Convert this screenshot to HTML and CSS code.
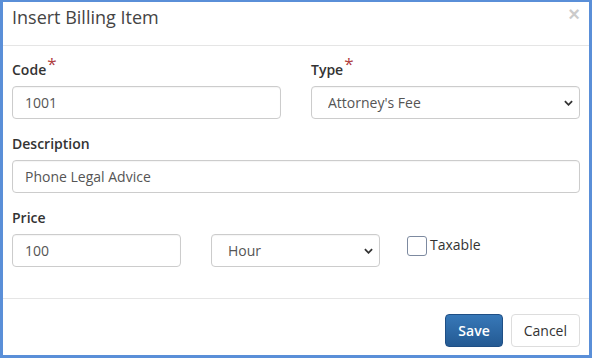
FILE: index.html
```html
<!DOCTYPE html>
<html lang="en">
<head>
  <meta charset="UTF-8" />
  <title>Insert Billing Item</title>
  <link rel="stylesheet" href="styles.css">
</head>
<body>

  <div class="frame">
    <div class="modal-header">
      <h4 class="modal-title">Insert Billing Item</h4>
      <button type="button" class="close">&times;</button>
    </div>

    <form class="modal-body" onsubmit="event.preventDefault();">
      <div class="row two">
        <div class="form-group">
          <label for="code">Code<span class="req">*</span></label>
          <input type="text" id="code" class="form-control" value="1001" />
        </div>
        <div class="form-group">
          <label for="type">Type<span class="req">*</span></label>
          <select id="type" class="form-control">
            <option>Attorney's Fee</option>
            <option>Expense</option>
          </select>
        </div>
      </div>

      <div class="form-group">
        <label for="description">Description</label>
        <input type="text" id="description" class="form-control" value="Phone Legal Advice" />
      </div>

      <div class="form-group">
        <label for="price">Price</label>
        <div class="row three">
          <input type="text" id="price" class="form-control" value="100" />
          <select id="unit" class="form-control">
            <option>Hour</option>
            <option>Item</option>
          </select>
          <label class="check">
            <input type="checkbox" id="taxable" />
            <span>Taxable</span>
          </label>
        </div>
      </div>
    </form>

    <div class="modal-footer">
      <button type="button" class="btn btn-primary">Save</button>
      <button type="button" class="btn btn-default">Cancel</button>
    </div>
  </div>

</body>
</html>
```

FILE: styles.css
```css
* {
  box-sizing: border-box;
}
body {
  margin: 0;
  font-family: "Open Sans", "Liberation Sans", sans-serif;
  font-size: 14px;
  color: #333;
  background: #fff;
}
.frame {
  display: flex;
  flex-direction: column;
  height: 358px;
  border: 3px solid #5a8fd8;
  border-top-width: 2px;
  background: #fff;
}
.modal-header {
  display: flex;
  justify-content: space-between;
  align-items: flex-start;
  height: 44px;
  padding: 3px 9px 0 9px;
  border-bottom: 1px solid #e5e5e5;
}
.modal-title {
  margin: 0;
  font-size: 18px;
  font-weight: normal;
  line-height: 24px;
  color: #444;
}
.close {
  margin: -1px 0 0;
  padding: 0;
  border: none;
  background: none;
  font-family: "Liberation Sans", sans-serif;
  font-size: 20px;
  line-height: 20px;
  font-weight: bold;
  color: #000;
  opacity: 0.2;
  cursor: pointer;
}
.modal-body {
  flex: 1;
  margin: 0;
  padding: 14px 9px 0 9px;
}
.form-group {
  margin-bottom: 15px;
}
.form-group > label {
  display: block;
  margin-bottom: 6px;
  font-weight: 600;
  line-height: 20px;
  color: #333;
}
.req {
  position: relative;
  top: -5px;
  margin-left: 1px;
  font-size: 17px;
  font-weight: normal;
  line-height: 0;
  color: #b04040;
}
.row {
  display: grid;
  column-gap: 30px;
}
.row.two {
  grid-template-columns: 1fr 1fr;
}
.row.three {
  grid-template-columns: 169px 169px 1fr;
}
.form-control {
  display: block;
  width: 100%;
  height: 33px;
  padding: 6px 12px;
  font-family: inherit;
  font-size: 14px;
  color: #555;
  background: #fff;
  border: 1px solid #ccc;
  border-radius: 4px;
  box-shadow: inset 0 1px 1px rgba(0,0,0,0.04);
}
select.form-control {
  appearance: none;
  -webkit-appearance: none;
  padding-left: 16px;
  background-image: url("data:image/svg+xml,%3Csvg xmlns='http://www.w3.org/2000/svg' width='10' height='6' viewBox='0 0 10 6'%3E%3Cpath d='M1 1l4 4 4-4' fill='none' stroke='%23333' stroke-width='2'/%3E%3C/svg%3E");
  background-repeat: no-repeat;
  background-position: right 6px center;
  background-size: 9px 6px;
}
.check {
  display: flex;
  align-items: flex-start;
  gap: 3px;
  margin-left: -3px;
  padding-top: 2px;
  font-weight: normal;
  color: #333;
}
.check input {
  appearance: none;
  -webkit-appearance: none;
  width: 20px;
  height: 20px;
  margin: 0;
  border: 1px solid #7d8aa0;
  border-radius: 3px;
  background: #fff;
}
.check span {
  line-height: 18px;
}
.modal-footer {
  display: flex;
  justify-content: flex-end;
  gap: 8px;
  padding: 15px 9px 8px;
  border-top: 1px solid #e5e5e5;
}
.btn {
  height: 33px;
  padding: 0 12px;
  font-family: inherit;
  font-size: 14px;
  border-radius: 4px;
  cursor: pointer;
}
.btn-primary {
  color: #fff;
  font-weight: 600;
  background: linear-gradient(#3778b8, #245a93);
  border: 1px solid #1f4f85;
}
.btn-default {
  color: #333;
  background: #fff;
  border: 1px solid #ddd;
}
```
